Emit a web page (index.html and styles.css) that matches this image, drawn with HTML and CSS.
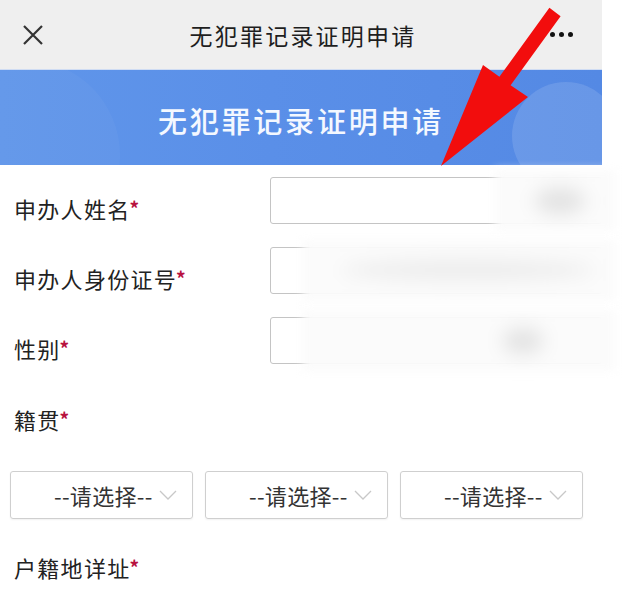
FILE: index.html
```html
<!DOCTYPE html>
<html lang="zh">
<head>
<meta charset="utf-8">
<title>无犯罪记录证明申请</title>
<link rel="stylesheet" href="styles.css">
</head>
<body>
<div class="app">
  <header class="topbar">
    <svg class="close" width="22" height="22" viewBox="0 0 22 22"><path d="M2 2L20 20M20 2L2 20" stroke="#333" stroke-width="2.2" fill="none"/></svg>
    <div class="top-title">无犯罪记录证明申请</div>
    <div class="dots"><span></span><span></span><span></span></div>
  </header>
  <section class="banner">
    <div class="bubble bubble-left"></div>
    <div class="bubble bubble-right"></div>
    <h1 class="banner-title">无犯罪记录证明申请</h1>
  </section>
  <main class="form">
    <div class="row">
      <label class="label">申办人姓名<i>*</i></label>
      <div class="field">
        <div class="redact r1"><div class="blob b1"></div></div>
      </div>
    </div>
    <div class="row">
      <label class="label">申办人身份证号<i>*</i></label>
      <div class="field">
        <div class="redact r2"><div class="blob b2"></div></div>
      </div>
    </div>
    <div class="row">
      <label class="label">性别<i>*</i></label>
      <div class="field">
        <div class="redact r2"><div class="blob b3"></div></div>
      </div>
    </div>
    <div class="block-label">籍贯<i>*</i></div>
    <div class="selects">
      <div class="select"><span>--请选择--</span><svg width="18" height="10" viewBox="0 0 18 10"><path d="M1 1L9 9L17 1" stroke="#c8c8c8" stroke-width="1.3" fill="none"/></svg></div>
      <div class="select"><span>--请选择--</span><svg width="18" height="10" viewBox="0 0 18 10"><path d="M1 1L9 9L17 1" stroke="#c8c8c8" stroke-width="1.3" fill="none"/></svg></div>
      <div class="select"><span>--请选择--</span><svg width="18" height="10" viewBox="0 0 18 10"><path d="M1 1L9 9L17 1" stroke="#c8c8c8" stroke-width="1.3" fill="none"/></svg></div>
    </div>
    <div class="block-label last">户籍地详址<i>*</i></div>
  </main>
</div>
<svg class="arrow" width="624" height="594" viewBox="0 0 624 594">
  <polygon points="441,166 483,65 499.4,76.8 549.4,7.8 560.6,16.2 510.6,85.2 528,97" fill="#f20d0d"/>
</svg>
</body>
</html>
```

FILE: styles.css
```css
html, body {
  margin: 0;
  padding: 0;
  background: #ffffff;
  width: 624px;
  height: 594px;
  overflow: hidden;
}
body {
  font-family: "Noto Sans CJK SC", "Noto Sans", sans-serif;
  color: #333;
  position: relative;
}
.app {
  width: 602px;
  background: #fff;
}
.topbar {
  height: 69px;
  background: #efefef;
  display: flex;
  align-items: center;
  position: relative;
  padding: 0 22px;
  box-sizing: border-box;
}
.close {
  position: absolute;
  left: 22px;
  top: 24px;
}
.top-title {
  flex: 1;
  text-align: center;
  font-size: 23px;
  letter-spacing: 2.2px;
  color: #1e1e1e;
  padding-left: 4px;
}
.dots {
  position: absolute;
  right: 29px;
  top: 32px;
  display: flex;
  gap: 4px;
}
.dots span {
  width: 5px;
  height: 5px;
  background: #111;
  border-radius: 50%;
}
.banner {
  height: 96px;
  background: linear-gradient(90deg, #6096ea 0%, #5a8fe8 45%, #5489e4 100%);
  display: flex;
  align-items: center;
  justify-content: center;
  position: relative;
  overflow: hidden;
  border-top: 1px solid #cfdcf3;
  box-sizing: border-box;
}
.bubble {
  position: absolute;
  border-radius: 50%;
}
.bubble-left {
  left: -70px;
  top: -10px;
  width: 190px;
  height: 190px;
  background: rgba(255,255,255,0.035);
}
.bubble-right {
  left: 512px;
  top: 12px;
  width: 108px;
  height: 108px;
  background: rgba(255,255,255,0.12);
}
.banner-title {
  margin: 0;
  font-size: 29px;
  font-weight: 500;
  letter-spacing: 2.8px;
  color: #f4f8ff;
  position: relative;
  padding-top: 4px;
}
.form {
  padding: 12px 0 0 14px;
}
.row {
  display: grid;
  grid-template-columns: 256px 1fr;
  align-items: center;
  height: 47px;
  margin-bottom: 23px;
}
.label, .block-label {
  font-size: 22px;
  letter-spacing: 1.3px;
  color: #222;
}
.label {
  padding-top: 14px;
}
.label i, .block-label i {
  font-style: normal;
  font-weight: 700;
  color: #b8123f;
  font-size: 19px;
  letter-spacing: 0;
  vertical-align: 2px;
  margin-left: -1px;
}
.field {
  height: 47px;
  border: 1.5px solid #c4c4c4;
  border-radius: 3px;
  box-sizing: border-box;
  position: relative;
}
.redact {
  position: absolute;
  top: -8px;
  bottom: -8px;
  right: -14px;
  background: #fbfbfb;
  filter: blur(5px);
}
.r1 { left: 224px; }
.r2 { left: 32px; }
.blob {
  position: absolute;
  background: #e2e2e2;
  border-radius: 50%;
  filter: blur(8px);
}
.b1 { left: 40px; top: 18px; width: 50px; height: 26px; }
.b2 { left: 40px; top: 20px; width: 250px; height: 20px; background: #ececec; }
.b3 { left: 200px; top: 18px; width: 40px; height: 26px; }
.block-label {
  margin-top: 40px;
  line-height: 30px;
}
.selects {
  display: flex;
  gap: 12px;
  margin: 37px 0 0 -4px;
}
.select {
  width: 183px;
  height: 48px;
  border: 1.5px solid #cfcfcf;
  border-radius: 3px;
  box-sizing: border-box;
  display: flex;
  align-items: center;
  justify-content: flex-start;
  gap: 6px;
  font-size: 22px;
  color: #333;
  padding-left: 43px;
  box-shadow: 0 1px 2px rgba(0,0,0,0.06);
}
.select span {
  letter-spacing: 0.3px;
}
.block-label.last {
  margin-top: 33px;
}
.arrow {
  position: absolute;
  left: 0;
  top: 0;
  pointer-events: none;
}
```
